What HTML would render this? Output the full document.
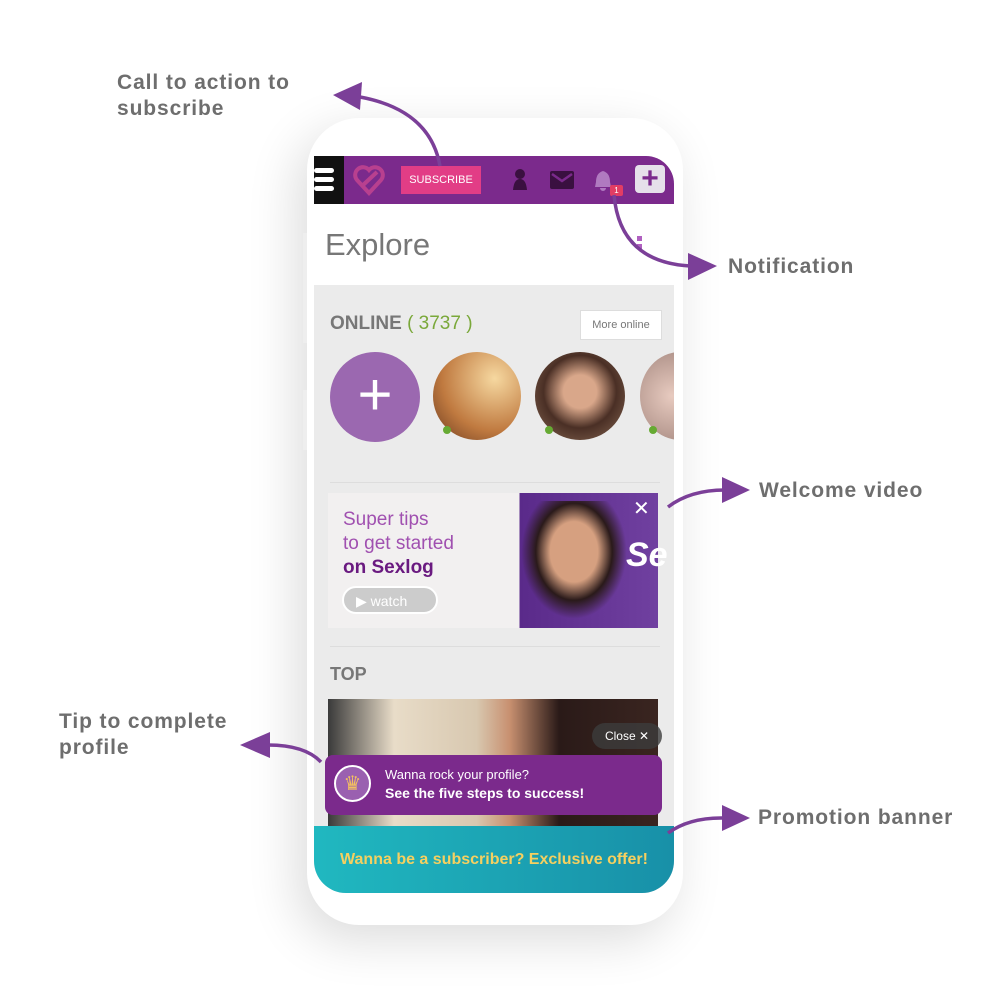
<!DOCTYPE html><html><head><style>
body{margin:0;width:1000px;height:1000px;background:#fff;position:relative;overflow:hidden;font-family:"Liberation Sans",sans-serif}
.a{position:absolute;font-weight:bold;color:#6e6e6e;font-size:21px;line-height:26px;letter-spacing:.9px}
.ab{position:absolute}
</style></head><body>
<div class="ab" style="left:307px;top:118px;width:376px;height:807px;border-radius:52px;background:#fff;box-shadow:-10px 15px 50px rgba(0,0,0,.14)"></div>
<div class="ab" style="left:303px;top:233px;width:4px;height:110px;background:#eee"></div>
<div class="ab" style="left:303px;top:390px;width:4px;height:60px;background:#eee"></div>
<div class="ab" style="left:314px;top:156px;width:360px;height:737px;border-radius:0 28px 32px 32px;overflow:hidden;background:#ebebeb">
 <div class="ab" style="left:0;top:0;width:360px;height:48px;background:#7b2a8c"></div>
 <div class="ab" style="left:0;top:0;width:30px;height:48px;background:#111"></div>
 <div class="ab" style="left:0;top:12px;width:20px;height:5px;background:#fff;border-radius:3px"></div>
 <div class="ab" style="left:0;top:21px;width:20px;height:5px;background:#fff;border-radius:3px"></div>
 <div class="ab" style="left:0;top:30px;width:20px;height:5px;background:#fff;border-radius:3px"></div>
 <svg class="ab" style="left:38px;top:8px" width="34" height="32"><path d="M17 29 L5 16 A7 7 0 0 1 17 6 A7 7 0 0 1 29 16 Z M10 22 L25 8" fill="none" stroke="#b8408f" stroke-width="4"/></svg>
 <div class="ab" style="left:87px;top:10px;width:80px;height:28px;background:#e23d86;color:#fff;font-size:11px;line-height:28px;text-align:center">SUBSCRIBE</div>
 <svg class="ab" style="left:196px;top:12px" width="20" height="24"><circle cx="10" cy="6" r="5" fill="#3a1040"/><path d="M3 22 Q4 11 10 11 Q16 11 17 22Z" fill="#3a1040"/></svg>
 <svg class="ab" style="left:236px;top:15px" width="24" height="18"><rect width="24" height="18" rx="2" fill="#3a1040"/><path d="M2 3 L12 10 L22 3" stroke="#7b2a8c" stroke-width="2.5" fill="none"/></svg>
 <svg class="ab" style="left:280px;top:14px" width="18" height="22"><path d="M9 1 Q16 3 16 12 L17 17 L1 17 L2 12 Q2 3 9 1Z M6 18 A3 3 0 0 0 12 18" fill="#b07ac0"/></svg>
 <div class="ab" style="left:296px;top:29px;width:13px;height:11px;background:#e23d64;color:#fff;font-size:8px;text-align:center;line-height:11px;border-radius:2px">1</div>
 <div class="ab" style="left:321px;top:9px;width:30px;height:28px;background:#e6e0ea;border-radius:4px;color:#7b2a8c;font-size:30px;font-weight:bold;line-height:27px;text-align:center">+</div>
 <div class="ab" style="left:0;top:48px;width:360px;height:81px;background:#fff"></div>
 <div class="ab" style="left:11px;top:71px;font-size:31px;color:#777">Explore</div>
 <div class="ab" style="left:323px;top:80px;width:5px;height:5px;background:#b060c0;box-shadow:0 8px 0 #b060c0"></div>
 <div class="ab" style="left:16px;top:157px;font-size:19px;font-weight:bold;color:#777">ONLINE <span style="font-weight:normal;color:#7aa83a">( 3737 )</span></div>
 <div class="ab" style="left:266px;top:154px;width:80px;height:28px;background:#fff;border:1px solid #ddd;font-size:11px;color:#777;line-height:28px;text-align:center">More online</div>
 <div class="ab" style="left:16px;top:196px;width:90px;height:90px;border-radius:50%;background:#9b68b0;color:#fff;font-size:60px;line-height:86px;text-align:center;font-weight:300">+</div>
 <div class="ab" style="left:119px;top:196px;width:88px;height:88px;border-radius:50%;background:radial-gradient(circle at 70% 30%,#f6d8a0,#c07a40 60%,#6a3a20)"></div>
 <div class="ab" style="left:221px;top:196px;width:90px;height:88px;border-radius:50%;background:radial-gradient(circle at 50% 45%,#d9a78a 25%,#4a2f25 55%,#8a6a55)"></div>
 <div class="ab" style="left:326px;top:196px;width:80px;height:88px;border-radius:50%;background:radial-gradient(circle at 40% 50%,#e8cbc0,#9a7d75)"></div>
 <div class="ab" style="left:129px;top:270px;width:8px;height:8px;border-radius:50%;background:#6a3;box-shadow:102px 0 0 #6a3,206px 0 0 #6a3"></div>
 <div class="ab" style="left:16px;top:326px;width:330px;height:1px;background:#ddd"></div>
 <div class="ab" style="left:14px;top:337px;width:330px;height:135px;background:linear-gradient(90deg,#f2f0f0 58%,#5a2a8a 58%,#7040a0)"></div>
 <div class="ab" style="left:200px;top:345px;width:120px;height:127px;background:radial-gradient(ellipse at 50% 40%,#d6a080 28%,#2a1a1a 45%,transparent 62%)"></div>
 <div class="ab" style="left:312px;top:380px;font-size:34px;font-weight:bold;color:#fff;font-style:italic">Se</div>
 <div class="ab" style="left:319px;top:340px;color:#fff;font-size:20px">✕</div>
 <div class="ab" style="left:29px;top:352px;font-size:19px;line-height:24px;color:#a050b0">Super tips<br>to get started<br><b style="color:#6a1a80">on Sexlog</b></div>
 <div class="ab" style="left:28px;top:430px;width:96px;height:28px;border-radius:14px;background:#ccc;border:2px solid #fff;color:#fff;font-size:14px;line-height:26px;text-indent:12px;box-sizing:border-box">▶ watch</div>
 <div class="ab" style="left:16px;top:490px;width:330px;height:1px;background:#ddd"></div>
 <div class="ab" style="left:16px;top:508px;font-size:18px;font-weight:bold;color:#777">TOP</div>
 <div class="ab" style="left:14px;top:543px;width:330px;height:130px;background:linear-gradient(90deg,#3a3a3a,#e8dcc8 20%,#d8c8b0 45%,#c89070 55%,#2a1a18 70%,#3a2520)"></div>
 <div class="ab" style="left:278px;top:567px;width:70px;height:26px;border-radius:13px;background:rgba(60,60,60,.8);color:#fff;font-size:12px;line-height:26px;text-align:center">Close ✕</div>
 <div class="ab" style="left:11px;top:599px;width:337px;height:60px;border-radius:8px;background:#7b2a8c"></div>
 <div class="ab" style="left:20px;top:609px;width:37px;height:37px;border-radius:50%;background:#9a60b0;border:2px solid #fff;box-sizing:border-box;color:#f3c060;text-align:center;line-height:34px;font-size:20px">♛</div>
 <div class="ab" style="left:71px;top:610px;color:#fff;font-size:13px;line-height:18px">Wanna rock your profile?<br><b style="font-size:14px">See the five steps to success!</b></div>
 <div class="ab" style="left:0;top:670px;width:360px;height:67px;background:linear-gradient(90deg,#20b8c0,#1890a8);color:#f5d060;font-size:16px;font-weight:bold;text-align:center;line-height:68px">Wanna be a subscriber? Exclusive offer!</div>
</div>
<div class="a" style="left:117px;top:70px">Call to action to<br>subscribe</div>
<div class="a" style="left:728px;top:254px">Notification</div>
<div class="a" style="left:759px;top:478px">Welcome video</div>
<div class="a" style="left:59px;top:709px">Tip to complete<br>profile</div>
<div class="a" style="left:758px;top:805px">Promotion banner</div>
<svg class="ab" style="left:0;top:0" width="1000" height="1000" fill="none" stroke="#7b3f98" stroke-width="3.5">
<path d="M440 166 Q430 110 360 97"/><path d="M333 95 L362 82 L360 110Z" fill="#7b3f98" stroke="none"/>
<path d="M614 195 Q620 262 690 266"/><path d="M717 266 L688 253 L688 280Z" fill="#7b3f98" stroke="none"/>
<path d="M668 507 Q690 490 725 490"/><path d="M750 490 L722 477 L722 503Z" fill="#7b3f98" stroke="none"/>
<path d="M321 762 Q305 745 268 745"/><path d="M240 745 L270 732 L270 758Z" fill="#7b3f98" stroke="none"/>
<path d="M668 833 Q690 817 725 818"/><path d="M750 818 L722 805 L722 831Z" fill="#7b3f98" stroke="none"/>
</svg>
</body></html>
